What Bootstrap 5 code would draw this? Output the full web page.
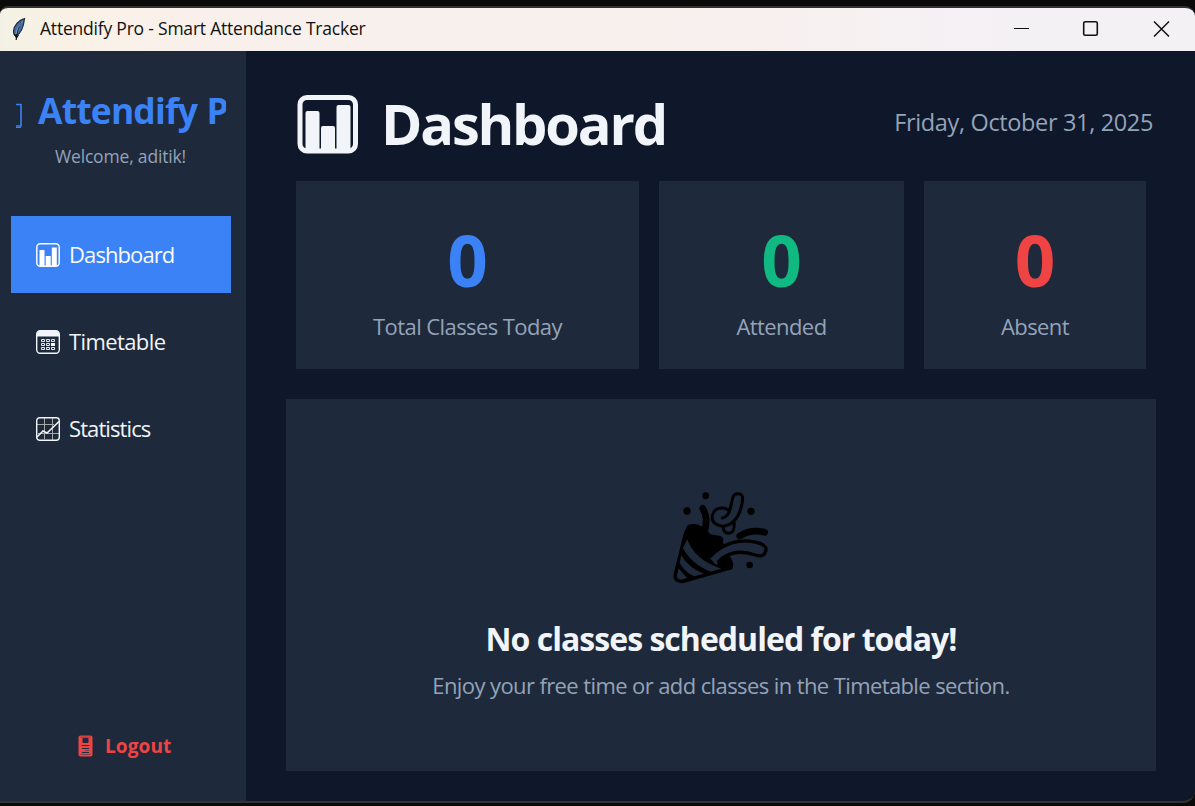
<!DOCTYPE html>
<html lang="en">
<head>
<meta charset="utf-8">
<meta name="viewport" content="width=device-width, initial-scale=1">
<title>Attendify Pro - Smart Attendance Tracker</title>
<link href="https://cdn.jsdelivr.net/npm/bootstrap@5.3.0/dist/css/bootstrap.min.css" rel="stylesheet">
<style>
body{background:#0a0a0a;font-family:"Open Sans","Noto Sans",sans-serif;color:#f1f5f9;height:806px;overflow:hidden;white-space:nowrap}
svg{display:block;flex:none}
.app-window{height:797px;margin-top:6px;border-top:2px solid #323031;border-bottom:2px solid #333332;border-radius:8px 10px 12px 0;overflow:hidden;background:#0f172a}
.title-strip{height:43px;background:linear-gradient(90deg,#f3f1e5 0,#faf1e6 70px,#f9f0ec 200px,#f8f0ee 60%,#f4f1f5 85%);color:#111;padding:0 25px 0 11px}
.title-text{font-size:17.5px;line-height:40px;height:43px;margin-left:13px;letter-spacing:-.21px}
.window-buttons{padding-bottom:2px}
.side-panel{width:246px;background:#1e293b;padding:33px 15px 0 11px}
.brand-row{height:52px;margin-left:5px;width:210px;overflow:hidden}
.brand-text{font-size:35.5px;line-height:52px;color:#3b82f6;margin-left:16px;letter-spacing:-.85px;word-spacing:1px}
.welcome{font-size:17.5px;line-height:24px;margin-top:8px;padding-right:1px;color:#94a3b8;letter-spacing:-.17px}
.side-link{height:77px;padding:0 0 0 25px;gap:9px;margin-bottom:10px;font-size:22px;line-height:77px;color:#f1f5f9;border-radius:0;letter-spacing:-.9px}
.side-link.active{background:#3b82f6;color:#f8fafc}
.side-link.timetable{letter-spacing:-.6px}
.side-menu{margin-top:48px}
.logout{margin-top:auto;margin-bottom:40px;height:30px;font-size:19px;line-height:30px;color:#ef4444;padding-left:67px;gap:12px;letter-spacing:.1px}
.main-area{padding:41px 39px 30px 40px}
.head-row{height:60px;padding:0 3px 0 11px}
.page-title{font-size:56px;line-height:62px;letter-spacing:-2.2px;margin-left:22px}
.date-text{font-size:23.5px;line-height:60px;color:#94a3b8;letter-spacing:-.35px}
.stat-grid{display:grid;grid-template-columns:343px 245px 222px;gap:20px;margin:29px 0 30px 10px}
.panel{background:#1e293b;border:0;border-radius:0;color:inherit}
.stat-box{height:188px;padding-top:39px}
.stat-num{font-size:71px;line-height:80px;font-weight:700}
.stat-label{font-size:22px;line-height:30px;margin-top:11px;color:#94a3b8;letter-spacing:-.58px}
.empty-box{height:372px;padding-top:81px}
.empty-box svg{margin:0 auto;padding-right:2px;width:122px}
.empty-head{font-size:32px;line-height:42px;margin-top:23px;letter-spacing:-.97px}
.empty-sub{font-size:22px;line-height:30px;margin-top:10px;color:#94a3b8;letter-spacing:-.6px}
</style>
</head>
<body>
<div class="app-window d-flex flex-column">
  <header class="title-strip d-flex align-items-center">
    <svg width="16" height="26" viewBox="0 0 16 26"><path d="M13.500 1.500C8 3 3 8 2.500 14c-.1 2 .5 4 2.500 5C9 17 12.500 11 13.500 1.500Z" fill="#3d6fae" stroke="#222b36" stroke-width="1.200"/><path d="M10.500 5C7 10 5.500 15 5.200 23M3.500 17l2 4 2-3" stroke="#111" stroke-width="1.200" fill="none"/><path d="M11.500 4.500C8 8 6 12 5 17" stroke="#c3cfd8" stroke-width=".7" fill="none"/></svg>
    <span class="title-text">Attendify Pro - Smart Attendance Tracker</span>
    <div class="window-buttons d-flex ms-auto align-items-center">
      <svg width="156" height="20" viewBox="0 0 156 20" fill="none" stroke="#111"><path d="M0 9.500h15" stroke-width="1.200"/><rect x="69.700" y="2.700" width="13.600" height="13.600" rx="1.500" stroke-width="1.600"/><path d="M140 2.500l15 15M155 2.500l-15 15" stroke-width="1.500"/></svg>
    </div>
  </header>
  <div class="d-flex flex-fill">
    <aside class="side-panel d-flex flex-column flex-shrink-0">
      <div class="brand-row d-flex">
        <svg width="6" height="50" viewBox="0 0 6 50" fill="none" stroke="#3b82f6"><path d="M0 20.500h5V42H0" stroke-width="1.600"/><path d="M0 43.500h5" stroke-width="1"/></svg>
        <span class="brand-text fw-bold">Attendify P</span>
      </div>
      <div class="welcome text-center">Welcome, aditik!</div>
      <nav class="side-menu nav flex-column">
        <a class="side-link active d-flex align-items-center text-decoration-none" href="#">
          <svg width="24" height="24" viewBox="0 0 24 24"><rect x=".8" y=".8" width="22.400" height="22.400" rx="3.500" fill="none" stroke="#f8fafc" stroke-width="1.500"/><path d="M3.500 7h5v16h-5zM9.700 13h5v10h-5zM15.800 4.500h5V23h-5zM3 22.500h18" fill="#fff"/></svg>
          <span>Dashboard</span></a>
        <a class="side-link timetable d-flex align-items-center text-decoration-none" href="#">
          <svg width="24" height="24" viewBox="0 0 24 24"><rect x=".7" y=".7" width="22.600" height="22.600" rx="3.500" fill="none" stroke="#f1f5f9" stroke-width="1.400"/><path d="M1 6.500V4q0-3 3-3h16q3 0 3 3v2.500z" fill="#f1f5f9"/><g fill="none" stroke="#e4e8ec" stroke-width="1"><path d="M5.500 9.500h3v2h-3zM10.500 9.500h3v2h-3zM15.500 9.500h3v2h-3zM5.500 13.500h3v2h-3zM10.500 13.500h3v2h-3zM5.500 17.500h3v2h-3zM10.500 17.500h3v2h-3zM15.500 17.500h3v2h-3z"/></g><path d="M15 13h4v3h-4z" fill="#fff"/></svg>
          <span>Timetable</span></a>
        <a class="side-link d-flex align-items-center text-decoration-none" href="#">
          <svg width="24" height="24" viewBox="0 0 24 24" fill="none" stroke="#f1f5f9"><path d="M1 7.500h17M8.500 1v21M16.500 1v22M2 16.500h21" stroke="#a5a9a6" stroke-width="1"/><rect x=".7" y=".7" width="22.600" height="22.600" rx="3" stroke-width="1.400"/><path d="M1 20l6-6 4 2L23 4.500" stroke-width="1.500"/></svg>
          <span>Statistics</span></a>
      </nav>
      <div class="logout d-flex align-items-center fw-bold">
        <svg width="15" height="22" viewBox="0 0 15 22"><rect x=".5" y=".5" width="14" height="21" rx="2" fill="#ef4444"/><path d="M5 3.500h5v4H5zM3.500 10.500h8M4 13.500h7M4 17.500h7" fill="#1e293b" stroke="#1e293b" stroke-width="1"/><path d="M2.500 2.200h10M2.500 19.500h10M7 15.500h4" stroke="#81343e" stroke-width=".8"/></svg>
        <span class="logout-text">Logout</span>
      </div>
    </aside>
    <main class="main-area flex-fill">
      <div class="head-row d-flex justify-content-between">
        <div class="d-flex">
          <svg width="62" height="62" viewBox="0 0 62 62"><rect x="3" y="5.500" width="55.500" height="53.500" rx="7" fill="none" stroke="#f1f5f9" stroke-width="5"/><path d="M8.500 21q0-2 2-2h10q2 0 2 2v37h-14zM24 36q0-2 2-2h10q2 0 2 2v22H24zM39.500 15q0-2 2-2h10q2 0 2 2v43h-14zM6 57.500h50v2H6z" fill="#f1f5f9"/></svg>
          <h1 class="page-title fw-bold mb-0">Dashboard</h1>
        </div>
        <span class="date-text">Friday, October 31, 2025</span>
      </div>
      <section class="stat-grid text-center">
        <div class="panel stat-box"><div class="stat-num" style="color:#3b82f6">0</div><div class="stat-label">Total Classes Today</div></div>
        <div class="panel stat-box"><div class="stat-num" style="color:#10b981">0</div><div class="stat-label">Attended</div></div>
        <div class="panel stat-box"><div class="stat-num" style="color:#ef4444">0</div><div class="stat-label">Absent</div></div>
      </section>
      <section class="panel empty-box text-center">
        <svg width="122" height="115" viewBox="0 0 360 345" fill="none" stroke="#000" stroke-linecap="round" stroke-linejoin="round">
          <g fill="#000" stroke="none"><circle cx="137" cy="47" r="10"/><circle cx="81" cy="93" r="11"/><circle cx="273" cy="94" r="11"/><circle cx="269" cy="255" r="10"/></g>
          <path d="M87 139Q108 132 130 148L150 168 181 173Q188 180 183 187L205 232Q218 250 213 264L196 268 67 305Q42 305 46 282L77 158Z" fill="#000" stroke-width="10"/>
          <path d="M82 178C94 214 125 247 184 266L152 275C111 258 82 232 69 204ZM64 225C76 248 101 270 132 281L103 289C82 279 68 266 59 248ZM56 265L81 294 64 299Q49 298 51 285Z" fill="#1e293b" stroke="none"/>
          <path d="M150 235C188 193 244 170 303 191Q324 201 316 216 310 233 286 225C246 211 207 214 181 244L168 255Z" fill="#1e293b" stroke="none"/>
          <path d="M150 230C186 191 244 170 303 191Q324 201 316 216 310 233 286 225C246 211 207 214 176 244" stroke-width="10"/>
          <path d="M128 85C142 107 140 127 134 154" stroke-width="20"/>
          <path d="M239 168Q274 146 314 157" stroke-width="20"/>
          <path d="M187 114Q205 110 210 88L218 54C224 35 249 38 248 56Q247 80 235 105C220 133 192 147 169 133C147 119 155 84 187 84Q202 84 208 95M190 143C191 165 219 166 222 142L223 129" stroke-width="9"/>
        </svg>
        <h2 class="empty-head fw-bold mb-0">No classes scheduled for today!</h2>
        <div class="empty-sub">Enjoy your free time or add classes in the Timetable section.</div>
      </section>
    </main>
  </div>
</div>
<script src="https://cdn.jsdelivr.net/npm/bootstrap@5.3.0/dist/js/bootstrap.bundle.min.js"></script>
</body>
</html>
